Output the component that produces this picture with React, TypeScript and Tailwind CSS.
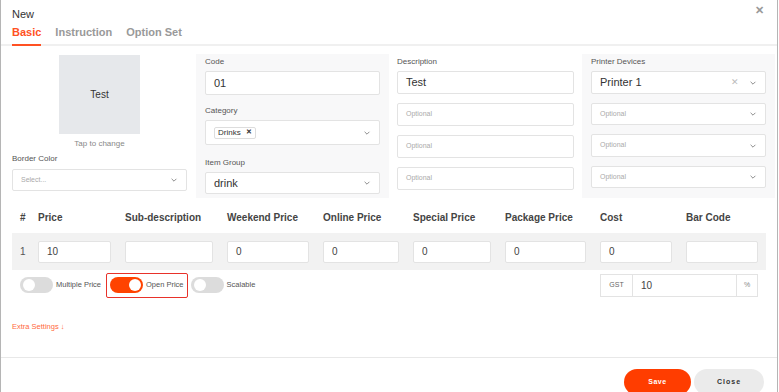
import React from 'react';

const font = { fontFamily: '"Liberation Sans", Arial, sans-serif' };

function Chevron() {
    return (
        <svg width="8" height="8" viewBox="0 0 10 10" className="shrink-0">
            <path d="M2 3.5 L5 6.5 L8 3.5" fill="none" stroke="#888" strokeWidth="1.2" />
        </svg>
    );
}

function Box({ children, className = '' }: { children?: React.ReactNode; className?: string }) {
    return (
        <div className={`flex items-center bg-white border border-[#e3e3e3] rounded-[2px] px-[8px] ${className}`}>
            {children}
        </div>
    );
}

function Label({ text }: { text: string }) {
    return <div className="text-[8px] text-[#555] h-[12px] leading-[12px] mb-[3px]">{text}</div>;
}

function Toggle({ on }: { on?: boolean }) {
    return (
        <div className={`w-[33px] h-[16px] rounded-full relative ${on ? 'bg-[#ff4300]' : 'bg-[#dcdcdc]'}`}>
            <div className={`absolute top-[2px] w-[12px] h-[12px] rounded-full bg-white ${on ? 'left-[19px]' : 'left-[3px]'}`}></div>
        </div>
    );
}

const cols = [
    { title: 'Price', value: '10' },
    { title: 'Sub-description', value: '' },
    { title: 'Weekend Price', value: '0' },
    { title: 'Online Price', value: '0' },
    { title: 'Special Price', value: '0' },
    { title: 'Package Price', value: '0' },
    { title: 'Cost', value: '0' },
    { title: 'Bar Code', value: '' },
];

export default function App() {
    return (
        <div style={font} className="w-[779px] h-[392px] bg-white overflow-hidden">
            <div className="w-[778px] h-[392px] overflow-hidden border-l border-r border-[#b5b5b5] text-[#333]">
                {/* header */}
                <div className="flex justify-between items-start px-[11px] pt-[6px] h-[22px]">
                    <span className="text-[11px] text-[#333]">New</span>
                    <span className="text-[11px] font-bold text-[#999] leading-none mt-[-1px] mr-[2px]">✕</span>
                </div>
                <div className="flex gap-[14px] px-[11px] border-b-2 border-[#f0f0f0] h-[24px] items-end">
                    <div className="text-[11px] font-bold text-[#ff5123] pb-[4px] border-b-2 border-[#ff5123] mb-[-2px]">Basic</div>
                    <div className="text-[11px] font-bold text-[#999] pb-[4px]">Instruction</div>
                    <div className="text-[11px] font-bold text-[#999] pb-[4px]">Option Set</div>
                </div>

                {/* top form */}
                <div className="grid grid-cols-4 pl-[2px] pr-[2px] mt-[8px] h-[144px]">
                    <div className="px-[9px] flex flex-col">
                        <div className="mx-auto mt-[1px] w-[81px] h-[79px] bg-[#e6e8eb] flex items-center justify-center text-[10px] text-[#333]">Test</div>
                        <div className="text-center text-[8px] leading-[10px] text-[#888] mt-[5px]">Tap to change</div>
                        <div className="text-[8px] leading-[10px] text-[#555] mt-[5px] mb-[5px]">Border Color</div>
                        <Box className="h-[22px] justify-between">
                            <span className="text-[7px] text-[#aaa]">Select...</span>
                            <Chevron />
                        </Box>
                    </div>
                    <div className="px-[9px] pt-[2px] bg-[#f8f8f9]">
                        <Label text="Code" />
                        <Box className="h-[24px] text-[11px]">01</Box>
                        <div className="h-[10px]"></div>
                        <Label text="Category" />
                        <Box className="h-[25px] justify-between">
                            <span className="flex items-center gap-[5px] border border-[#ddd] rounded-[2px] px-[3px] h-[12px] text-[8px] text-[#333]">
                                Drinks <span className="text-[7px] font-bold">✕</span>
                            </span>
                            <Chevron />
                        </Box>
                        <div className="h-[12px]"></div>
                        <Label text="Item Group" />
                        <Box className="h-[22px] justify-between text-[11px]">
                            drink
                            <Chevron />
                        </Box>
                    </div>
                    <div className="px-[8px] pt-[2px]">
                        <Label text="Description" />
                        <div className="flex flex-col gap-[9px]">
                            <Box className="h-[23px] text-[11px]">Test</Box>
                            <Box className="h-[23px] text-[7px] text-[#aaa]">Optional</Box>
                            <Box className="h-[23px] text-[7px] text-[#aaa]">Optional</Box>
                            <Box className="h-[23px] text-[7px] text-[#aaa]">Optional</Box>
                        </div>
                    </div>
                    <div className="px-[9px] pt-[2px] bg-[#f8f8f9]">
                        <Label text="Printer Devices" />
                        <div className="flex flex-col gap-[9px]">
                            <Box className="h-[23px] justify-between text-[11px]">
                                Printer 1
                                <span className="flex items-center gap-[10px]">
                                    <span className="text-[9px] text-[#bbb]">✕</span>
                                    <Chevron />
                                </span>
                            </Box>
                            <Box className="h-[22px] justify-between text-[7px] text-[#aaa]">Optional<Chevron /></Box>
                            <Box className="h-[23px] justify-between text-[7px] text-[#aaa]">Optional<Chevron /></Box>
                            <Box className="h-[22px] justify-between text-[7px] text-[#aaa]">Optional<Chevron /></Box>
                        </div>
                    </div>
                </div>

                {/* price table */}
                <div className="mx-[11px] mt-[10px]">
                    <div className="grid grid-cols-[26px_87px_102px_96px_90px_92px_95px_86px_80px] h-[18px] items-center text-[10px] font-bold text-[#444]">
                        <div className="pl-[8px]">#</div>
                        {cols.map(c => (
                            <div key={c.title}>{c.title}</div>
                        ))}
                    </div>
                    <div className="grid grid-cols-[26px_87px_102px_96px_90px_92px_95px_86px_80px] h-[37px] items-center bg-[#f2f2f2] mt-[7px]">
                        <div className="pl-[8px] text-[10px] text-[#555]">1</div>
                        {cols.map((c, i) => (
                            <div key={c.title} className={i === cols.length - 1 ? 'pr-[8px]' : 'pr-[14px]'}>
                                <Box className="h-[22px] text-[10px] text-[#444]">{c.value}</Box>
                            </div>
                        ))}
                    </div>
                </div>

                {/* toggles + gst */}
                <div className="flex justify-between items-center mx-[11px] mt-[3px] h-[24px]">
                    <div className="flex items-center pl-[8px]">
                        <Toggle />
                        <span className="text-[7.5px] text-[#555] ml-[3px]">Multiple Price</span>
                        <div className="flex items-center border border-[#e8322a] rounded-[2px] h-[25px] ml-[5px] px-[3px] pr-[3px]">
                            <Toggle on />
                            <span className="text-[7.5px] text-[#555] ml-[3px]">Open Price</span>
                        </div>
                        <div className="ml-[3px]"><Toggle /></div>
                        <span className="text-[7.5px] text-[#555] ml-[3px]">Scalable</span>
                    </div>
                    <div className="flex items-stretch h-[23px] w-[158px] mr-[8px] border border-[#e3e3e3] bg-white">
                        <div className="w-[32px] flex items-center justify-center text-[7px] text-[#666] border-r border-[#e3e3e3]">GST</div>
                        <div className="flex-1 flex items-center px-[8px] text-[10px] text-[#444]">10</div>
                        <div className="w-[21px] flex items-center justify-center text-[7px] text-[#888] border-l border-[#e3e3e3]">%</div>
                    </div>
                </div>

                <div className="mx-[11px] mt-[25px] h-[9px] leading-[9px] text-[7.5px] text-[#ff6a3d]">Extra Settings ↓</div>

                <div className="mt-[26px] border-t border-[#e8e8e8] flex justify-end gap-[3px] pr-[13px] pt-[11px]">
                    <div className="w-[67px] h-[26px] rounded-full bg-[#ff3d00] text-white text-[7px] font-bold tracking-[0.5px] flex items-center justify-center">Save</div>
                    <div className="w-[70px] h-[26px] rounded-full bg-[#ebebeb] text-[#333] text-[7px] font-bold tracking-[1px] flex items-center justify-center">Close</div>
                </div>
            </div>
        </div>
    );
}
